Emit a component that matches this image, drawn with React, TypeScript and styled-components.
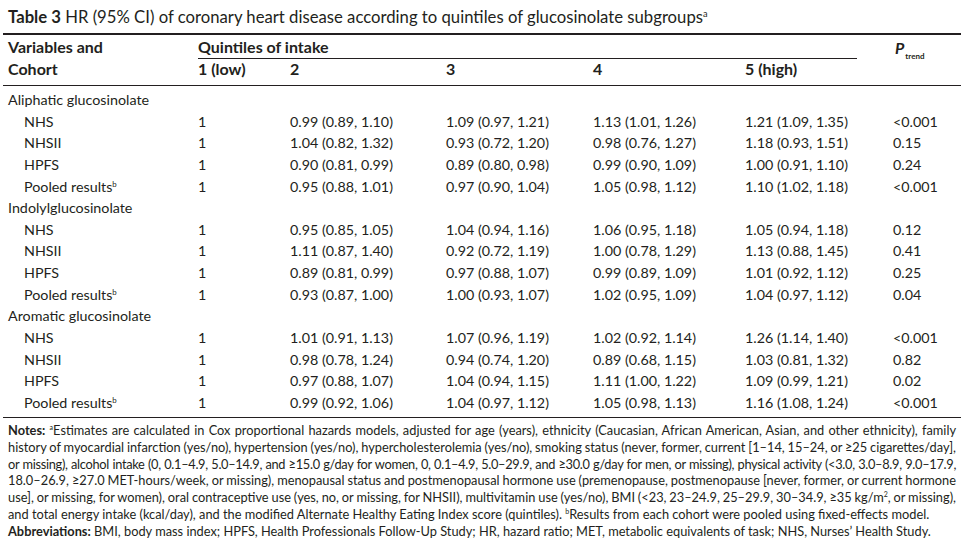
import React from 'react'
import styled, { createGlobalStyle } from 'styled-components'

const GlobalStyle = createGlobalStyle`
  html, body {
    margin: 0;
    padding: 0;
    background: #ffffff;
  }
  body {
    font-family: Lato, 'Liberation Sans', sans-serif;
    color: #231f20;
  }
`

const COLS = '190px 92px 156px 147px 152px 148px 73px'

const Page = styled.div`
  width: 958px;
  padding: 0 3px;
`

const Caption = styled.div`
  padding: 7px 5px 0;
  height: 26px;
  font-size: 16.7px;
  line-height: 20px;
  white-space: nowrap;

  b {
    font-weight: 700;
  }
`

const Sup = styled.sup`
  font-size: 0.55em;
  vertical-align: 0.7em;
  line-height: 0;
`

const Head = styled.div`
  display: grid;
  grid-template-columns: ${COLS};
  grid-template-rows: 24px 26px;
  border-top: 2px solid #231f20;
  border-bottom: 1px solid #231f20;
  font-size: 16px;
  font-weight: 700;
`

const HeadCell = styled.div<{ $row: number }>`
  padding-left: 5px;
  line-height: 17px;
  padding-top: ${({ $row }) => ($row === 1 ? '3px' : '1px')};
  white-space: nowrap;
`

const SpanHead = styled.div`
  grid-column: 2 / span 5;
  padding: 3px 31px 0 5px;
`

const SpanInner = styled.div`
  line-height: 17px;
  height: 20px;
  border-bottom: 1px solid #231f20;
`

const TrendHead = styled.div`
  grid-column: 7;
  grid-row: 1 / span 2;
  padding: 4px 0 0 7px;
  font-size: 16px;
  line-height: 17px;

  i {
    font-style: italic;
    font-weight: 700;
  }
  span {
    font-size: 8px;
    font-weight: 700;
    vertical-align: -5px;
    margin-left: 1px;
  }
`

const Body = styled.div`
  padding: 3px 0 4px;
  border-bottom: 1px solid #231f20;
`

const Row = styled.div`
  display: grid;
  grid-template-columns: ${COLS};
  height: 21.64px;
  line-height: 21.64px;
  font-size: 14.3px;
  white-space: nowrap;
`

const Cell = styled.div<{ $indent?: boolean }>`
  padding-left: ${({ $indent }) => ($indent ? '21px' : '5px')};
`

const GroupCell = styled.div`
  grid-column: 1 / span 7;
  padding-left: 5px;
`

const Notes = styled.div`
  padding: 4px 5px 0;
  font-size: 12.8px;
  line-height: 16.7px;

  b {
    font-weight: 700;
  }
`

// squeeze: how much a justified line is compressed to keep it on one line
const NoteLine = styled.div<{ $justify?: boolean; $squeeze?: number }>`
  white-space: nowrap;
  text-align: ${({ $justify }) => ($justify ? 'justify' : 'left')};
  text-align-last: ${({ $justify }) => ($justify ? 'justify' : 'left')};
  letter-spacing: ${({ $squeeze }) => ($squeeze === 2 ? '-0.3px' : '0')};
  word-spacing: ${({ $squeeze }) => ($squeeze === 2 ? '-1.6px' : $squeeze === 1 ? '-1.4px' : '0')};
`

type Group = { name: string; rows: string[][] }

const groups: Group[] = [
  {
    name: 'Aliphatic glucosinolate',
    rows: [
      ['NHS', '0.99 (0.89, 1.10)', '1.09 (0.97, 1.21)', '1.13 (1.01, 1.26)', '1.21 (1.09, 1.35)', '<0.001'],
      ['NHSII', '1.04 (0.82, 1.32)', '0.93 (0.72, 1.20)', '0.98 (0.76, 1.27)', '1.18 (0.93, 1.51)', '0.15'],
      ['HPFS', '0.90 (0.81, 0.99)', '0.89 (0.80, 0.98)', '0.99 (0.90, 1.09)', '1.00 (0.91, 1.10)', '0.24'],
      ['Pooled results', '0.95 (0.88, 1.01)', '0.97 (0.90, 1.04)', '1.05 (0.98, 1.12)', '1.10 (1.02, 1.18)', '<0.001'],
    ],
  },
  {
    name: 'Indolylglucosinolate',
    rows: [
      ['NHS', '0.95 (0.85, 1.05)', '1.04 (0.94, 1.16)', '1.06 (0.95, 1.18)', '1.05 (0.94, 1.18)', '0.12'],
      ['NHSII', '1.11 (0.87, 1.40)', '0.92 (0.72, 1.19)', '1.00 (0.78, 1.29)', '1.13 (0.88, 1.45)', '0.41'],
      ['HPFS', '0.89 (0.81, 0.99)', '0.97 (0.88, 1.07)', '0.99 (0.89, 1.09)', '1.01 (0.92, 1.12)', '0.25'],
      ['Pooled results', '0.93 (0.87, 1.00)', '1.00 (0.93, 1.07)', '1.02 (0.95, 1.09)', '1.04 (0.97, 1.12)', '0.04'],
    ],
  },
  {
    name: 'Aromatic glucosinolate',
    rows: [
      ['NHS', '1.01 (0.91, 1.13)', '1.07 (0.96, 1.19)', '1.02 (0.92, 1.14)', '1.26 (1.14, 1.40)', '<0.001'],
      ['NHSII', '0.98 (0.78, 1.24)', '0.94 (0.74, 1.20)', '0.89 (0.68, 1.15)', '1.03 (0.81, 1.32)', '0.82'],
      ['HPFS', '0.97 (0.88, 1.07)', '1.04 (0.94, 1.15)', '1.11 (1.00, 1.22)', '1.09 (0.99, 1.21)', '0.02'],
      ['Pooled results', '0.99 (0.92, 1.06)', '1.04 (0.97, 1.12)', '1.05 (0.98, 1.13)', '1.16 (1.08, 1.24)', '<0.001'],
    ],
  },
]

export default function App() {
  return (
    <Page>
      <GlobalStyle />
      <Caption>
        <b>Table 3</b> HR (95% CI) of coronary heart disease according to quintiles of glucosinolate subgroups
        <Sup>a</Sup>
      </Caption>

      <Head>
        <HeadCell $row={1}>Variables and</HeadCell>
        <SpanHead>
          <SpanInner>Quintiles of intake</SpanInner>
        </SpanHead>
        <TrendHead>
          <i>P</i>
          <span>trend</span>
        </TrendHead>
        <HeadCell $row={2}>Cohort</HeadCell>
        <HeadCell $row={2}>1 (low)</HeadCell>
        <HeadCell $row={2}>2</HeadCell>
        <HeadCell $row={2}>3</HeadCell>
        <HeadCell $row={2}>4</HeadCell>
        <HeadCell $row={2}>5 (high)</HeadCell>
      </Head>

      <Body>
        {groups.map((g) => (
          <React.Fragment key={g.name}>
            <Row>
              <GroupCell>{g.name}</GroupCell>
            </Row>
            {g.rows.map((r) => (
              <Row key={g.name + r[0]}>
                <Cell $indent>
                  {r[0]}
                  {r[0] === 'Pooled results' && <Sup>b</Sup>}
                </Cell>
                <Cell>1</Cell>
                {r.slice(1).map((v, i) => (
                  <Cell key={i}>{v}</Cell>
                ))}
              </Row>
            ))}
          </React.Fragment>
        ))}
      </Body>

      <Notes>
        <NoteLine $justify>
          <b>Notes:</b> <Sup>a</Sup>Estimates are calculated in Cox proportional hazards models, adjusted for age (years), ethnicity (Caucasian, African American, Asian, and other ethnicity), family
        </NoteLine>
        <NoteLine $justify $squeeze={1}>
          history of myocardial infarction (yes/no), hypertension (yes/no), hypercholesterolemia (yes/no), smoking status (never, former, current [1–14, 15–24, or ≥25 cigarettes/day],
        </NoteLine>
        <NoteLine $justify $squeeze={2}>
          or missing), alcohol intake (0, 0.1–4.9, 5.0–14.9, and ≥15.0 g/day for women, 0, 0.1–4.9, 5.0–29.9, and ≥30.0 g/day for men, or missing), physical activity (&lt;3.0, 3.0–8.9, 9.0–17.9,
        </NoteLine>
        <NoteLine $justify $squeeze={1}>
          18.0–26.9, ≥27.0 MET-hours/week, or missing), menopausal status and postmenopausal hormone use (premenopause, postmenopause [never, former, or current hormone
        </NoteLine>
        <NoteLine $justify $squeeze={1}>
          use], or missing, for women), oral contraceptive use (yes, no, or missing, for NHSII), multivitamin use (yes/no), BMI (&lt;23, 23–24.9, 25–29.9, 30–34.9, ≥35 kg/m<Sup>2</Sup>, or missing),
        </NoteLine>
        <NoteLine>
          and total energy intake (kcal/day), and the modified Alternate Healthy Eating Index score (quintiles). <Sup>b</Sup>Results from each cohort were pooled using fixed-effects model.
        </NoteLine>
        <NoteLine>
          <b>Abbreviations:</b> BMI, body mass index; HPFS, Health Professionals Follow-Up Study; HR, hazard ratio; MET, metabolic equivalents of task; NHS, Nurses’ Health Study.
        </NoteLine>
      </Notes>
    </Page>
  )
}
